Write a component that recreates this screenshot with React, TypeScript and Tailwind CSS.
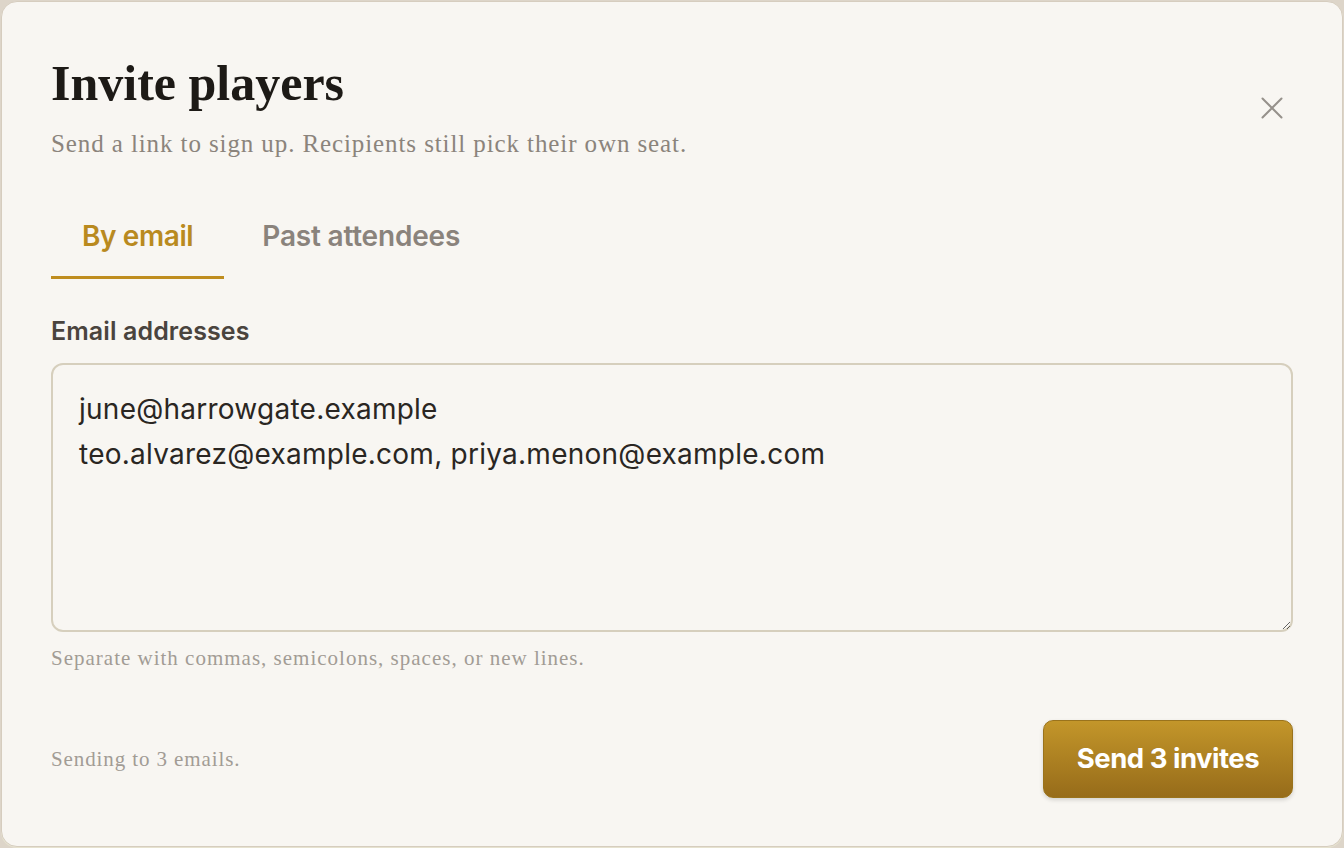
import React from "react";

export default function App() {
  return (
    <div className="w-[1344px] h-[848px] bg-[#ddd5c9] p-px">
      <div className="h-full w-full rounded-[16px] border border-[#d6cdbf] bg-[#f8f6f2] shadow-[0_1px_0_#e6e2cf] flex flex-col px-[49px] pt-[51px] pb-[48px]">
        <div className="flex items-start justify-between">
          <div className="font-['Liberation_Serif',serif]">
            <h1 className="text-[50px] leading-[60px] font-bold text-[#1d1a16]">Invite players</h1>
            <p className="mt-[16px] text-[25px] leading-[30px] tracking-[0.9px] text-[#8b847c]">
              Send a link to sign up. Recipients still pick their own seat.
            </p>
          </div>
          <button className="mt-[43px] mr-[9px] text-[#96918b]" aria-label="Close">
            <svg width="24" height="24" viewBox="0 0 24 24" fill="none" stroke="currentColor" strokeWidth="2" strokeLinecap="round">
              <path d="M2.5 2.5L21.5 21.5M21.5 2.5L2.5 21.5" />
            </svg>
          </button>
        </div>

        <div className="mt-[60px] flex items-end gap-[6px] font-[Inter,sans-serif]">
          <div className="px-[31px] pb-[23px] border-b-[3px] border-[#bf8d1f] text-[28px] leading-[34px] font-semibold text-[#b98a1f] tracking-[-0.4px]">
            By email
          </div>
          <div className="px-[32px] pb-[23px] border-b-[3px] border-transparent text-[28px] leading-[34px] font-semibold text-[#8a837c] tracking-[-0.2px]">
            Past attendees
          </div>
        </div>

        <label className="mt-[36px] font-[Inter,sans-serif] text-[25px] leading-[32px] font-semibold text-[#4a443e] tracking-[0.1px]">
          Email addresses
        </label>

        <textarea
          className="mt-[16px] h-[269px] w-full resize-y rounded-[12px] border-2 border-[#d6cfbd] bg-[#f8f6f2] px-[26px] pt-[22px] font-[Inter,sans-serif] text-[28px] leading-[45px] tracking-[0.25px] text-[#2a2622] outline-none"
          defaultValue={"june@harrowgate.example\nteo.alvarez@example.com, priya.menon@example.com"}
        />

        <p className="mt-[13px] font-['Liberation_Serif',serif] text-[21px] leading-[26px] tracking-[1px] text-[#a29c95]">
          Separate with commas, semicolons, spaces, or new lines.
        </p>

        <div className="mt-auto flex items-center justify-between">
          <span className="font-['Liberation_Serif',serif] text-[21px] leading-[26px] tracking-[0.9px] text-[#a29c95]">
            Sending to 3 emails.
          </span>
          <button className="h-[78px] w-[250px] rounded-[10px] border border-[#9a731c] bg-gradient-to-b from-[#c3962a] to-[#976c1a] font-[Inter,sans-serif] text-white text-[27.5px] font-bold tracking-[-0.5px] shadow-[0_2px_4px_rgba(0,0,0,0.15)]">
            Send 3 invites
          </button>
        </div>
      </div>
    </div>
  );
}
